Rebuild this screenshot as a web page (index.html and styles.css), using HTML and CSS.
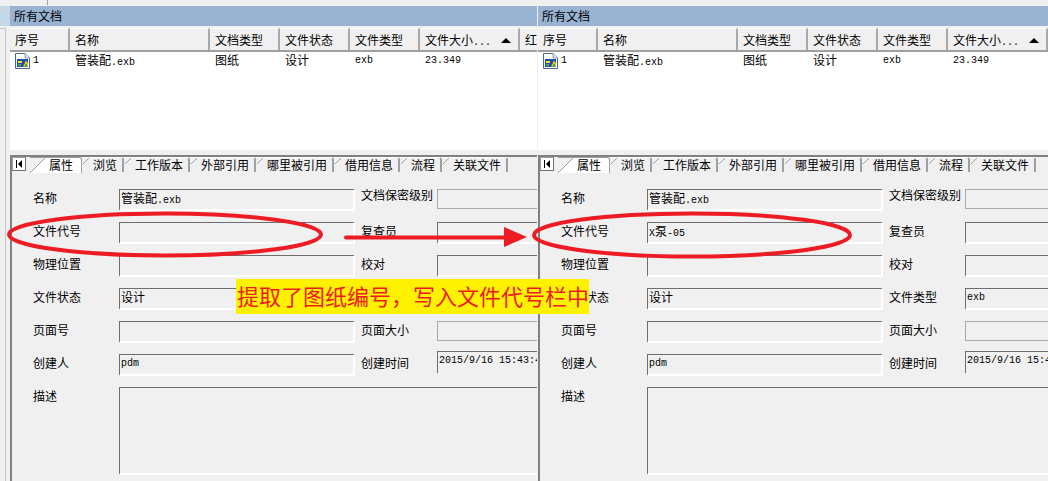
FILE: index.html
```html
<!DOCTYPE html>
<html lang="zh-CN">
<head>
<meta charset="utf-8">
<title>所有文档</title>
<link rel="stylesheet" href="styles.css">
</head>
<body>
<div class="screen">
  <div class="topbar"><div class="topbar-tab"></div></div>
  <div class="app">
    <div class="rail"><div class="rail-band"></div><div class="rail-body"></div></div>

    <section class="pane pane-left">
      <div class="title">所有文档</div>
      <div class="list">
        <div class="cols head">
          <div class="hc">序号</div><div class="hc">名称</div><div class="hc">文档类型</div><div class="hc">文件状态</div><div class="hc">文件类型</div>
          <div class="hc hc-sort">文件大小<span class="m">...</span><i class="sort"></i></div><div class="hc hc-last">红</div>
        </div>
        <div class="cols row">
          <div class="c c-no"><svg class="ficon" viewBox="0 0 15 16"><path d="M.5.5H10L14.500 5V15.500H.5Z" fill="#fff" stroke="#4a6a94"/><path d="M10 .5V5H14.500" fill="#dfe8f2" stroke="#8aa0bc"/><rect x="2" y="6" width="11" height="8" fill="#1d4fa8"/><rect x="3" y="8" width="4" height="2" fill="#f6e33a"/><rect x="3" y="11" width="3" height="2" fill="#3fae49"/><path d="M8 13.500 11 7.500 13 10V13.500Z" fill="#e8c81e"/><rect x="10" y="11" width="2" height="2" fill="#3fae49"/></svg><span class="m">1</span></div>
          <div class="c">管装配<span class="m">.exb</span></div><div class="c">图纸</div><div class="c">设计</div><div class="c m">exb</div><div class="c m">23.349</div><div class="c"></div>
        </div>
      </div>
      <div class="panel">
        <div class="tabs">
          <div class="tab-nav"><i class="nav-bar"></i><i class="nav-arrow"></i></div>
          <div class="tab tab-active">属性</div><div class="tab">浏览</div><div class="tab">工作版本</div><div class="tab">外部引用</div><div class="tab">哪里被引用</div><div class="tab">借用信息</div><div class="tab">流程</div><div class="tab">关联文件</div>
        </div>
        <div class="form">
          <div class="lbl">名称</div><div class="fld">管装配<span class="m">.exb</span></div><div class="lbl lbl-up">文档保密级别</div><div class="fld2 fld2-off"></div>
          <div class="lbl">文件代号</div><div class="fld"></div><div class="lbl">复查员</div><div class="fld2"></div>
          <div class="lbl">物理位置</div><div class="fld"></div><div class="lbl">校对</div><div class="fld2"></div>
          <div class="lbl">文件状态</div><div class="fld">设计</div><div class="lbl">文件类型</div><div class="fld2 m">exb</div>
          <div class="lbl">页面号</div><div class="fld"></div><div class="lbl">页面大小</div><div class="fld2 fld2-off"></div>
          <div class="lbl">创建人</div><div class="fld m">pdm</div><div class="lbl">创建时间</div><div class="fld2 fld2-up m">2015/9/16 15:43:47</div>
          <div class="lbl">描述</div><div class="fld fld-desc"></div>
        </div>
      </div>
    </section>

    <section class="pane pane-right">
      <div class="title">所有文档</div>
      <div class="list">
        <div class="cols head">
          <div class="hc">序号</div><div class="hc">名称</div><div class="hc">文档类型</div><div class="hc">文件状态</div><div class="hc">文件类型</div>
          <div class="hc hc-sort">文件大小<span class="m">...</span><i class="sort"></i></div>
        </div>
        <div class="cols row">
          <div class="c c-no"><svg class="ficon" viewBox="0 0 15 16"><path d="M.5.5H10L14.500 5V15.500H.5Z" fill="#fff" stroke="#4a6a94"/><path d="M10 .5V5H14.500" fill="#dfe8f2" stroke="#8aa0bc"/><rect x="2" y="6" width="11" height="8" fill="#1d4fa8"/><rect x="3" y="8" width="4" height="2" fill="#f6e33a"/><rect x="3" y="11" width="3" height="2" fill="#3fae49"/><path d="M8 13.500 11 7.500 13 10V13.500Z" fill="#e8c81e"/><rect x="10" y="11" width="2" height="2" fill="#3fae49"/></svg><span class="m">1</span></div>
          <div class="c">管装配<span class="m">.exb</span></div><div class="c">图纸</div><div class="c">设计</div><div class="c m">exb</div><div class="c m">23.349</div>
        </div>
      </div>
      <div class="panel">
        <div class="tabs">
          <div class="tab-nav"><i class="nav-bar"></i><i class="nav-arrow"></i></div>
          <div class="tab tab-active">属性</div><div class="tab">浏览</div><div class="tab">工作版本</div><div class="tab">外部引用</div><div class="tab">哪里被引用</div><div class="tab">借用信息</div><div class="tab">流程</div><div class="tab">关联文件</div>
        </div>
        <div class="form">
          <div class="lbl">名称</div><div class="fld">管装配<span class="m">.exb</span></div><div class="lbl lbl-up">文档保密级别</div><div class="fld2 fld2-off"></div>
          <div class="lbl">文件代号</div><div class="fld"><span class="m">X</span>泵<span class="m">-05</span></div><div class="lbl">复查员</div><div class="fld2"></div>
          <div class="lbl">物理位置</div><div class="fld"></div><div class="lbl">校对</div><div class="fld2"></div>
          <div class="lbl">文件状态</div><div class="fld">设计</div><div class="lbl">文件类型</div><div class="fld2 m">exb</div>
          <div class="lbl">页面号</div><div class="fld"></div><div class="lbl">页面大小</div><div class="fld2 fld2-off"></div>
          <div class="lbl">创建人</div><div class="fld m">pdm</div><div class="lbl">创建时间</div><div class="fld2 fld2-up m">2015/9/16 15:43:47</div>
          <div class="lbl">描述</div><div class="fld fld-desc"></div>
        </div>
      </div>
    </section>
  </div>

  <svg class="marks" viewBox="0 0 1048 481">
    <ellipse cx="165" cy="234.500" rx="156" ry="21" fill="none" stroke="#ed1c24" stroke-width="4"/>
    <ellipse cx="692" cy="235" rx="158" ry="21.500" fill="none" stroke="#ed1c24" stroke-width="4"/>
    <path d="M346 237.500H506" stroke="#ed1c24" stroke-width="4" stroke-linecap="round"/>
    <path d="M504 227 527 237 504 247Z" fill="#ed1c24"/>
  </svg>
  <div class="banner">提取了图纸编号，写入文件代号栏中</div>
</div>
</body>
</html>
```
FILE: styles.css
```css
* { box-sizing: border-box; }
html, body { margin: 0; padding: 0; }
body { background: #f0f0f0; color: #000; font-family: "Noto Sans CJK SC", "Liberation Sans", sans-serif; font-size: 12px; }
.screen { position: relative; width: 1048px; height: 481px; overflow: hidden; background: #f0f0f0; }
.m { font-family: "Liberation Mono", monospace; font-size: 10px; }

.topbar { height: 6px; }
.topbar-tab { width: 48px; height: 5px; border-right: 1px solid #a0a0a0; }

.app { display: flex; height: 475px; }
.rail { width: 10px; flex: none; }
.rail-band { height: 20px; background: #c6d7e7; }
.rail-body { height: 455px; margin-top: 2px; width: 6px; border-top: 1px solid #c8c8c8; border-right: 1px solid #c8c8c8; }

.pane { display: flex; flex-direction: column; overflow: hidden; flex: none; }
.pane-left { width: 527px; }
.pane-right { width: 510px; margin-left: 1px; }
.pane-left .cols { grid-template-columns: 60px 140px 70px 70px 70px 100px 17px; }
.pane-right .cols { grid-template-columns: 60px 140px 70px 70px 70px 100px; }

.title { height: 20px; line-height: 20px; padding-left: 4px; background: #98b4d2; flex: none; }
.list { height: 122px; flex: none; margin-top: 2px; background: #fff; }
.cols { display: grid; }
.head { height: 24px; background: #f0f0f0; border-bottom: 2px solid #a0a0a0; }
.hc { line-height: 21px; padding-left: 5px; border-right: 2px solid #a8a8a8; border-top: 1px solid #fff; white-space: nowrap; overflow: hidden; position: relative; }
.hc-last { border-right: 0; }
.sort { position: absolute; right: 7px; top: 9px; width: 0; height: 0; border-left: 5px solid transparent; border-right: 5px solid transparent; border-bottom: 5px solid #000; }
.row { height: 18px; }
.c { line-height: 16px; padding-left: 5px; white-space: nowrap; overflow: hidden; }
.c.m { line-height: 18px; }
.c-no { display: flex; align-items: center; gap: 3px; padding-left: 5px; }
.ficon { width: 15px; height: 16px; flex: none; }

.panel { flex: 1; margin-top: 5px; border-left: 2px solid #808080; border-top: 2px solid #808080; min-height: 0; }
.tabs { display: flex; height: 16px; }
.tab-nav { width: 14px; height: 14px; margin-right: 4px; background: #fff; border: 1px solid #a0a0a0; border-right-color: #707070; border-bottom-color: #707070; display: flex; align-items: center; justify-content: center; gap: 1px; flex: none; }
.nav-bar { width: 1px; height: 8px; background: #000; }
.nav-arrow { width: 0; height: 0; border-top: 4px solid transparent; border-bottom: 4px solid transparent; border-right: 4px solid #000; }
.tab { position: relative; height: 15px; line-height: 14px; padding: 0 5px 0 11px; border-right: 2px solid #a0a0a0; border-top: 1px solid #fff; border-top-right-radius: 3px; white-space: nowrap; }
.tab::before { content: ""; position: absolute; left: 1px; top: 0; width: 6px; height: 6px; background: linear-gradient(to bottom right, transparent 45%, #a0a0a0 45% 55%, transparent 55%); }
.tab-active { height: 16px; padding: 0 8px 0 19px; border-right: 1px solid #a0a0a0; border-top: 1px solid #a0a0a0; background: linear-gradient(#fff, #fff) 15px 0 / 100% 100% no-repeat; }
.tab-active::before { left: 0; width: 15px; height: 15px; background: linear-gradient(to bottom right, transparent 47%, #a0a0a0 47% 53%, #fff 53%); }

.form { display: grid; grid-template-columns: 86px 242px 76px 1fr; grid-auto-rows: 22px; row-gap: 11px; padding: 16px 0 0 21px; }
.lbl { line-height: 18px; white-space: nowrap; }
.lbl-up { margin-top: -3px; }
.fld, .fld2 { height: 22px; line-height: 15px; padding-left: 1px; border-top: 1px solid #6e6e6e; border-left: 1px solid #6e6e6e; border-right: 2px solid #fff; border-bottom: 2px solid #fff; white-space: nowrap; overflow: hidden; min-width: 0; }
.fld.m, .fld2.m { line-height: 18px; }
.fld { margin-right: 6px; }
.fld2 { margin-right: -4px; }
.fld2-off { height: 20px; border: 1px solid #a9a9a9; }
.fld2-up { margin-top: -3px; border-bottom: 0; }
.fld-desc { grid-column: 2 / 5; height: 88px; margin-right: -4px; }

.marks { position: absolute; left: 0; top: 0; width: 1048px; height: 481px; }
.banner { position: absolute; left: 236px; top: 279px; width: 353px; height: 35px; padding-left: 1px; background: #fff200; color: #ed1c24; font-size: 22px; line-height: 33px; white-space: nowrap; }
```
